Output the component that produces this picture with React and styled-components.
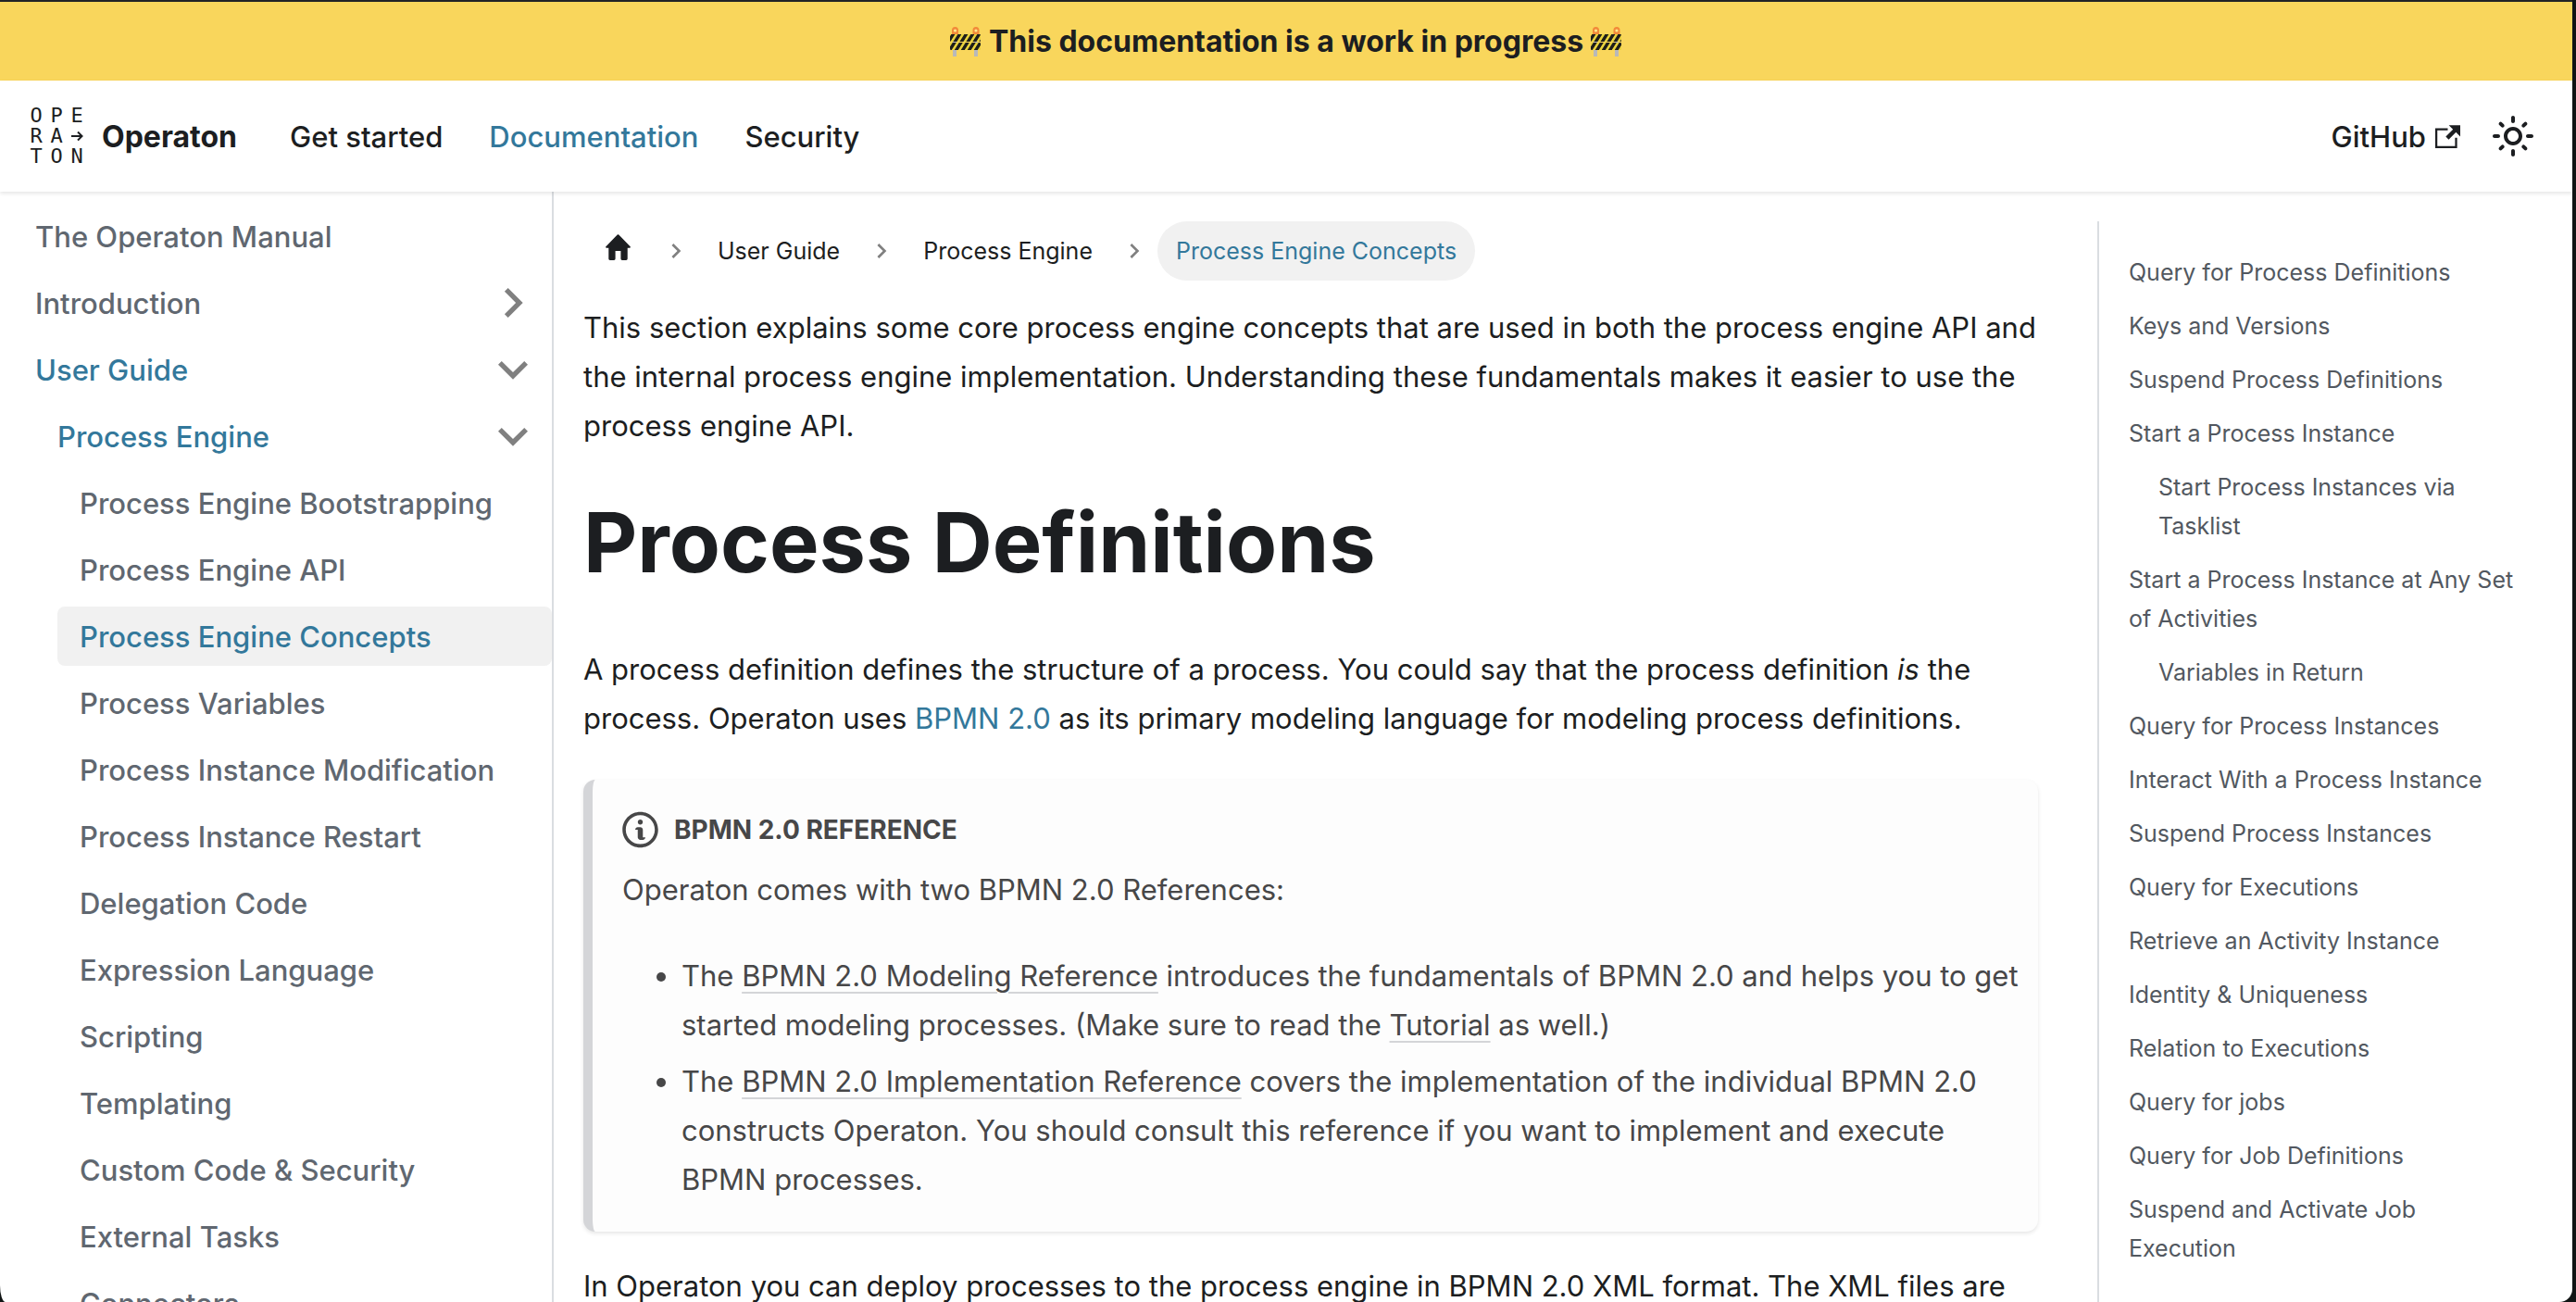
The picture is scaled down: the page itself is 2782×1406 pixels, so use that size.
import React from "react";
import styled, { createGlobalStyle, css } from "styled-components";

const color = {
  text: "#1c1e21",
  primary: "#33789b",
  menu: "#606770",
  toc: "#525860",
  border: "#dadde1",
  active: "#f1f1f1",
};

const GlobalStyle = createGlobalStyle`
  *, *::before, *::after { box-sizing: border-box; }
  body {
    margin: 0;
    background: #101414;
    color: ${color.text};
    font-family: Inter, "Liberation Sans", sans-serif;
    font-size: 31px;
    line-height: 53px;
  }
  a { color: inherit; text-decoration: none; }
  svg { display: block; flex: none; fill: currentColor; }
`;

const Page = styled.div`
  display: flex;
  flex-direction: column;
  height: 100vh;
  margin-right: 4px;
  overflow: hidden;
  background: #fff;
  border-top: 2px solid #222326;
  border-radius: 0 0 14px 6px / 0 0 14px 18px;
`;

const Announcement = styled.div`
  flex: none;
  display: flex;
  align-items: center;
  justify-content: center;
  gap: 8px;
  height: 85px;
  background: #f9d65c;
  font-size: 32px;
  font-weight: 700;
`;

const Navbar = styled.nav`
  flex: none;
  display: flex;
  align-items: center;
  justify-content: space-between;
  height: 120px;
  padding: 0 32px 0 28px;
  box-shadow: 0 2px 4px rgba(0, 0, 0, 0.1);
  z-index: 1;
`;

const NavGroup = styled.div`
  display: flex;
  align-items: center;
`;

const Brand = styled.a`
  display: flex;
  align-items: center;
  gap: 20px;
  margin-right: 32px;
  font-size: 32px;
  font-weight: 700;
`;

const LogoGrid = styled.span`
  display: grid;
  grid-template-columns: repeat(3, 22px);
  grid-auto-rows: 22px;
  place-items: center;
  width: 62px;
  font: 400 22px/22px "DejaVu Sans Mono", monospace;
`;

const NavLink = styled.a`
  display: flex;
  align-items: center;
  gap: 10px;
  padding: 0 25px;
  font-weight: 500;
  color: ${(p) => (p.$active ? color.primary : "inherit")};
`;

const IconButton = styled.button`
  display: grid;
  place-items: center;
  width: 64px;
  height: 64px;
  padding: 0;
  border: 0;
  background: none;
  color: inherit;
`;

const Body = styled.div`
  flex: 1;
  display: flex;
  min-height: 0;
`;

const Sidebar = styled.aside`
  flex: none;
  width: 598px;
  padding: 16px 0 0 14px;
  border-right: 2px solid ${color.border};
  overflow: hidden;
`;

const MenuList = styled.ul`
  display: flex;
  flex-direction: column;
  gap: 8px;
  margin: 0;
  padding: 0 0 0 ${(p) => (p.$nested ? "24px" : "0")};
  list-style: none;
`;

const MenuItem = styled.li`
  display: flex;
  flex-direction: column;
  gap: 8px;
`;

const MenuLink = styled.a`
  display: flex;
  align-items: center;
  justify-content: space-between;
  height: 64px;
  padding: 0 10px 0 24px;
  border-radius: 8px;
  font-weight: 500;
  white-space: nowrap;
  color: ${(p) => (p.$active ? color.primary : color.menu)};
  ${(p) => p.$current && css`background: ${color.active};`}
  svg { color: #808080; }
`;

const Main = styled.main`
  flex: 1;
  display: grid;
  grid-template-columns: 3fr 1fr;
  min-width: 0;
`;

const Article = styled.article`
  min-width: 0;
  padding: 32px 32px 0;
`;

const Breadcrumbs = styled.ol`
  display: flex;
  align-items: center;
  margin: 0 0 24px;
  padding: 0;
  list-style: none;
  font-size: 25px;
`;

const Crumb = styled.li`
  display: flex;
  align-items: center;
`;

const CrumbLink = styled.a`
  display: flex;
  align-items: center;
  height: 64px;
  padding: 0 20px;
  border-radius: 32px;
  color: ${(p) => (p.$active ? color.primary : "inherit")};
  background: ${(p) => (p.$active ? color.active : "none")};
`;

const Separator = styled.span`
  display: grid;
  place-items: center;
  width: 50px;
  color: #808080;
`;

const Paragraph = styled.p`
  margin: 0 0 40px;
`;

const Title = styled.h1`
  margin: 0 0 50px;
  font-size: 90px;
  line-height: 120px;
  font-weight: 700;
`;

const TextLink = styled.a`
  color: ${color.primary};
`;

const Admonition = styled.aside`
  margin-bottom: 32px;
  padding: 32px 16px 30px 32px;
  border-left: 10px solid #d4d5d8;
  border-radius: 13px;
  background: #fdfdfd;
  box-shadow: 0 2px 4px rgba(0, 0, 0, 0.1);
  color: #474748;
`;

const AdmonitionHeading = styled.h5`
  display: flex;
  align-items: center;
  gap: 17px;
  margin: 0 0 16px;
  font-size: 28px;
  line-height: 44px;
  font-weight: 700;
  text-transform: uppercase;
`;

const BulletList = styled.ul`
  display: flex;
  flex-direction: column;
  gap: 8px;
  margin: 0;
  padding-left: 64px;
`;

const UnderlinedLink = styled.a`
  text-decoration: underline;
  text-decoration-color: #d4d5d8;
  text-decoration-thickness: 2px;
  text-underline-offset: 6px;
`;

const TocColumn = styled.div`
  padding: 32px 32px 4px;
  min-height: 0;
`;

const TocList = styled.ul`
  display: flex;
  flex-direction: column;
  gap: 16px;
  height: 100%;
  margin: 0;
  padding: 34px 24px 16px 32px;
  border-left: 2px solid ${color.border};
  list-style: none;
  overflow: hidden;
  font-size: 25px;
  line-height: 42px;
  color: ${color.toc};
`;

const TocItem = styled.li`
  padding-left: ${(p) => (p.$nested ? "32px" : "0")};
`;

const BarrierIcon = () => (
  <svg width="34" height="34" viewBox="0 0 34 34" aria-hidden="true">
    <defs>
      <pattern id="hazard" width="7" height="8" patternUnits="userSpaceOnUse" patternTransform="skewX(-32)">
        <rect width="7" height="8" fill="#e8d23c" />
        <rect width="4" height="8" fill="#1e1e1a" />
      </pattern>
    </defs>
    <rect x="3" y="8" width="4" height="25" fill="#b9b9b9" />
    <rect x="26" y="8" width="4" height="25" fill="#b9b9b9" />
    <path d="M2 9V4.500a3.500 3.500 0 0 1 7 0V9zM24.500 9V4.500a3.500 3.500 0 0 1 7 0V9z" fill="#f28a3a" />
    <circle cx="5.500" cy="5" r="1.600" fill="#ffe98a" />
    <circle cx="28" cy="5" r="1.600" fill="#ffe98a" />
    <rect y="9" width="33" height="8" rx="1" fill="url(#hazard)" />
    <rect y="18" width="33" height="8" rx="1" fill="url(#hazard)" />
  </svg>
);

const ArrowIcon = () => (
  <svg width="14" height="14" viewBox="0 0 14 14" aria-hidden="true">
    <path d="M1 7h11M8 2.500 12.500 7 8 11.500" fill="none" stroke="currentColor" strokeWidth="2" />
  </svg>
);

const ExternalIcon = () => (
  <svg width="27" height="27" viewBox="0 0 24 24" aria-hidden="true">
    <path d="M21 13v10h-21v-19h12v2h-10v15h17v-8h2zm3-12h-10.988l4.035 4-6.977 7.070 2.828 2.828 6.977-7.070 4.125 4.172v-11z" />
  </svg>
);

const SunIcon = () => (
  <svg width="48" height="48" viewBox="0 0 24 24" aria-hidden="true">
    <path d="M12,9c1.65,0,3,1.35,3,3s-1.35,3-3,3s-3-1.35-3-3S10.35,9,12,9 M12,7c-2.76,0-5,2.24-5,5s2.24,5,5,5s5-2.24,5-5 S14.76,7,12,7L12,7z M2,13l2,0c0.55,0,1-0.45,1-1s-0.45-1-1-1l-2,0c-0.55,0-1,0.45-1,1S1.45,13,2,13z M20,13l2,0c0.55,0,1-0.45,1-1 s-0.45-1-1-1l-2,0c-0.55,0-1,0.45-1,1S19.45,13,20,13z M11,2v2c0,0.55,0.45,1,1,1s1-0.45,1-1V2c0-0.55-0.45-1-1-1S11,1.45,11,2z M11,20v2c0,0.55,0.45,1,1,1s1-0.45,1-1v-2c0-0.55-0.45-1-1-1C11.45,19,11,19.45,11,20z M5.99,4.58c-0.39-0.39-1.03-0.39-1.41,0 c-0.39,0.39-0.39,1.03,0,1.41l1.06,1.06c0.39,0.39,1.03,0.39,1.41,0s0.39-1.03,0-1.41L5.99,4.58z M18.36,16.95 c-0.39-0.39-1.03-0.39-1.41,0c-0.39,0.39-0.39,1.03,0,1.41l1.06,1.06c0.39,0.39,1.03,0.39,1.41,0c0.39-0.39,0.39-1.03,0-1.41 L18.36,16.95z M19.42,5.99c0.39-0.39,0.39-1.03,0-1.41c-0.39-0.39-1.03-0.39-1.41,0l-1.06,1.06c-0.39,0.39-0.39,1.03,0,1.41 s1.03,0.39,1.41,0L19.42,5.99z M7.05,18.36c0.39-0.39,0.39-1.03,0-1.41c-0.39-0.39-1.03-0.39-1.41,0l-1.06,1.06 c-0.39,0.39-0.39,1.03,0,1.41s1.03,0.39,1.41,0L7.05,18.36z" />
  </svg>
);

const HomeIcon = () => (
  <svg width="35" height="40" viewBox="0 2 24 24" preserveAspectRatio="none" aria-hidden="true">
    <path d="M10 19v-5h4v5c0 .55.45 1 1 1h3c.55 0 1-.45 1-1v-7h1.7c.46 0 .68-.57.33-.87L12.67 3.600c-.38-.34-.96-.34-1.34 0l-8.360 7.530c-.34.3-.13.87.33.87H5v7c0 .55.45 1 1 1h3c.55 0 1-.45 1-1z" />
  </svg>
);

const InfoIcon = () => (
  <svg width="39" height="44" viewBox="0 0 14 16" aria-hidden="true">
    <path
      fillRule="evenodd"
      d="M6.3 5.69a.942.942 0 0 1-.28-.7c0-.28.09-.52.28-.7.19-.18.42-.28.7-.28.28 0 .52.09.7.28.18.19.28.42.28.7 0 .28-.09.52-.28.7a1 1 0 0 1-.7.3c-.28 0-.52-.11-.7-.3zM8 7.99c-.02-.25-.11-.48-.31-.69-.2-.19-.42-.3-.69-.31H6c-.27.02-.48.13-.69.31-.2.2-.3.44-.31.69h1v3c.02.27.11.5.31.69.2.2.42.31.69.31h1c.27 0 .48-.11.69-.31.2-.19.3-.42.31-.69H8V7.98v.01zM7 2.3c-3.14 0-5.7 2.54-5.7 5.68 0 3.14 2.56 5.7 5.7 5.7s5.7-2.55 5.7-5.7c0-3.15-2.56-5.69-5.7-5.69v.01zM7 .98c3.86 0 7 3.14 7 7s-3.14 7-7 7-7-3.12-7-7 3.14-7 7-7z"
    />
  </svg>
);

const CHEVRONS = {
  right: "M8.590 16.590 13.170 12 8.590 7.410 10 6l6 6-6 6z",
  down: "M16.590 8.590 12 13.170 7.410 8.590 6 10l6 6 6-6z",
};

const Chevron = ({ size, direction }) => (
  <svg width={size} height={size} viewBox="0 0 24 24" aria-hidden="true">
    <path d={CHEVRONS[direction]} />
  </svg>
);

const menu = [
  { label: "The Operaton Manual" },
  { label: "Introduction", chevron: "right" },
  {
    label: "User Guide",
    chevron: "down",
    active: true,
    items: [
      {
        label: "Process Engine",
        chevron: "down",
        active: true,
        items: [
          { label: "Process Engine Bootstrapping" },
          { label: "Process Engine API" },
          { label: "Process Engine Concepts", active: true, current: true },
          { label: "Process Variables" },
          { label: "Process Instance Modification" },
          { label: "Process Instance Restart" },
          { label: "Delegation Code" },
          { label: "Expression Language" },
          { label: "Scripting" },
          { label: "Templating" },
          { label: "Custom Code & Security" },
          { label: "External Tasks" },
          { label: "Connectors" },
        ],
      },
    ],
  },
];

const toc = [
  { label: "Query for Process Definitions" },
  { label: "Keys and Versions" },
  { label: "Suspend Process Definitions" },
  { label: "Start a Process Instance" },
  { label: "Start Process Instances via Tasklist", nested: true },
  { label: "Start a Process Instance at Any Set of Activities" },
  { label: "Variables in Return", nested: true },
  { label: "Query for Process Instances" },
  { label: "Interact With a Process Instance" },
  { label: "Suspend Process Instances" },
  { label: "Query for Executions" },
  { label: "Retrieve an Activity Instance" },
  { label: "Identity & Uniqueness" },
  { label: "Relation to Executions" },
  { label: "Query for jobs" },
  { label: "Query for Job Definitions" },
  { label: "Suspend and Activate Job Execution" },
];

const Menu = ({ items, nested }) => (
  <MenuList $nested={nested}>
    {items.map((item) => (
      <MenuItem key={item.label}>
        <MenuLink
          href="#"
          $active={item.active}
          $current={item.current}
          aria-current={item.current ? "page" : undefined}
        >
          {item.label}
          {item.chevron && <Chevron size={64} direction={item.chevron} />}
        </MenuLink>
        {item.items && <Menu items={item.items} nested />}
      </MenuItem>
    ))}
  </MenuList>
);

export default function App() {
  return (
    <>
      <GlobalStyle />
      <Page>
        <Announcement>
          <BarrierIcon />
          <span>This documentation is a work in progress</span>
          <BarrierIcon />
        </Announcement>

        <Navbar aria-label="Main">
          <NavGroup>
            <Brand href="#">
              <LogoGrid aria-hidden="true">
                {[..."OPERA"].map((letter, i) => (
                  <span key={i}>{letter}</span>
                ))}
                <ArrowIcon />
                {[..."TON"].map((letter) => (
                  <span key={letter}>{letter}</span>
                ))}
              </LogoGrid>
              Operaton
            </Brand>
            <NavLink href="#">Get started</NavLink>
            <NavLink href="#" $active>Documentation</NavLink>
            <NavLink href="#">Security</NavLink>
          </NavGroup>
          <NavGroup>
            <NavLink href="#">
              GitHub
              <ExternalIcon />
            </NavLink>
            <IconButton type="button" aria-label="Switch between dark and light mode">
              <SunIcon />
            </IconButton>
          </NavGroup>
        </Navbar>

        <Body>
          <Sidebar>
            <Menu items={menu} />
          </Sidebar>
          <Main>
            <Article>
              <Breadcrumbs>
                <Crumb>
                  <CrumbLink href="#" aria-label="Home page"><HomeIcon /></CrumbLink>
                  <Separator><Chevron size={32} direction="right" /></Separator>
                </Crumb>
                <Crumb>
                  <CrumbLink href="#">User Guide</CrumbLink>
                  <Separator><Chevron size={32} direction="right" /></Separator>
                </Crumb>
                <Crumb>
                  <CrumbLink href="#">Process Engine</CrumbLink>
                  <Separator><Chevron size={32} direction="right" /></Separator>
                </Crumb>
                <Crumb>
                  <CrumbLink href="#" $active>Process Engine Concepts</CrumbLink>
                </Crumb>
              </Breadcrumbs>

              <Paragraph>
                This section explains some core process engine concepts that are used in both the
                process engine API and the internal process engine implementation. Understanding
                these fundamentals makes it easier to use the process engine API.
              </Paragraph>

              <Title>Process Definitions</Title>

              <Paragraph>
                A process definition defines the structure of a process. You could say that the
                process definition <em>is</em> the process. Operaton uses{" "}
                <TextLink href="#">BPMN 2.0</TextLink> as its primary modeling language for
                modeling process definitions.
              </Paragraph>

              <Admonition>
                <AdmonitionHeading>
                  <InfoIcon />
                  BPMN 2.0 Reference
                </AdmonitionHeading>
                <Paragraph>Operaton comes with two BPMN 2.0 References:</Paragraph>
                <BulletList>
                  <li>
                    The <UnderlinedLink href="#">BPMN 2.0 Modeling Reference</UnderlinedLink>{" "}
                    introduces the fundamentals of BPMN 2.0 and helps you to get started modeling
                    processes. (Make sure to read the{" "}
                    <UnderlinedLink href="#">Tutorial</UnderlinedLink> as well.)
                  </li>
                  <li>
                    The <UnderlinedLink href="#">BPMN 2.0 Implementation Reference</UnderlinedLink>{" "}
                    covers the implementation of the individual BPMN 2.0 constructs Operaton. You
                    should consult this reference if you want to implement and execute BPMN
                    processes.
                  </li>
                </BulletList>
              </Admonition>

              <Paragraph>
                In Operaton you can deploy processes to the process engine in BPMN 2.0 XML format.
                The XML files are
              </Paragraph>
            </Article>

            <TocColumn>
              <TocList>
                {toc.map((item) => (
                  <TocItem key={item.label} $nested={item.nested}>
                    <a href="#">{item.label}</a>
                  </TocItem>
                ))}
              </TocList>
            </TocColumn>
          </Main>
        </Body>
      </Page>
    </>
  );
}
